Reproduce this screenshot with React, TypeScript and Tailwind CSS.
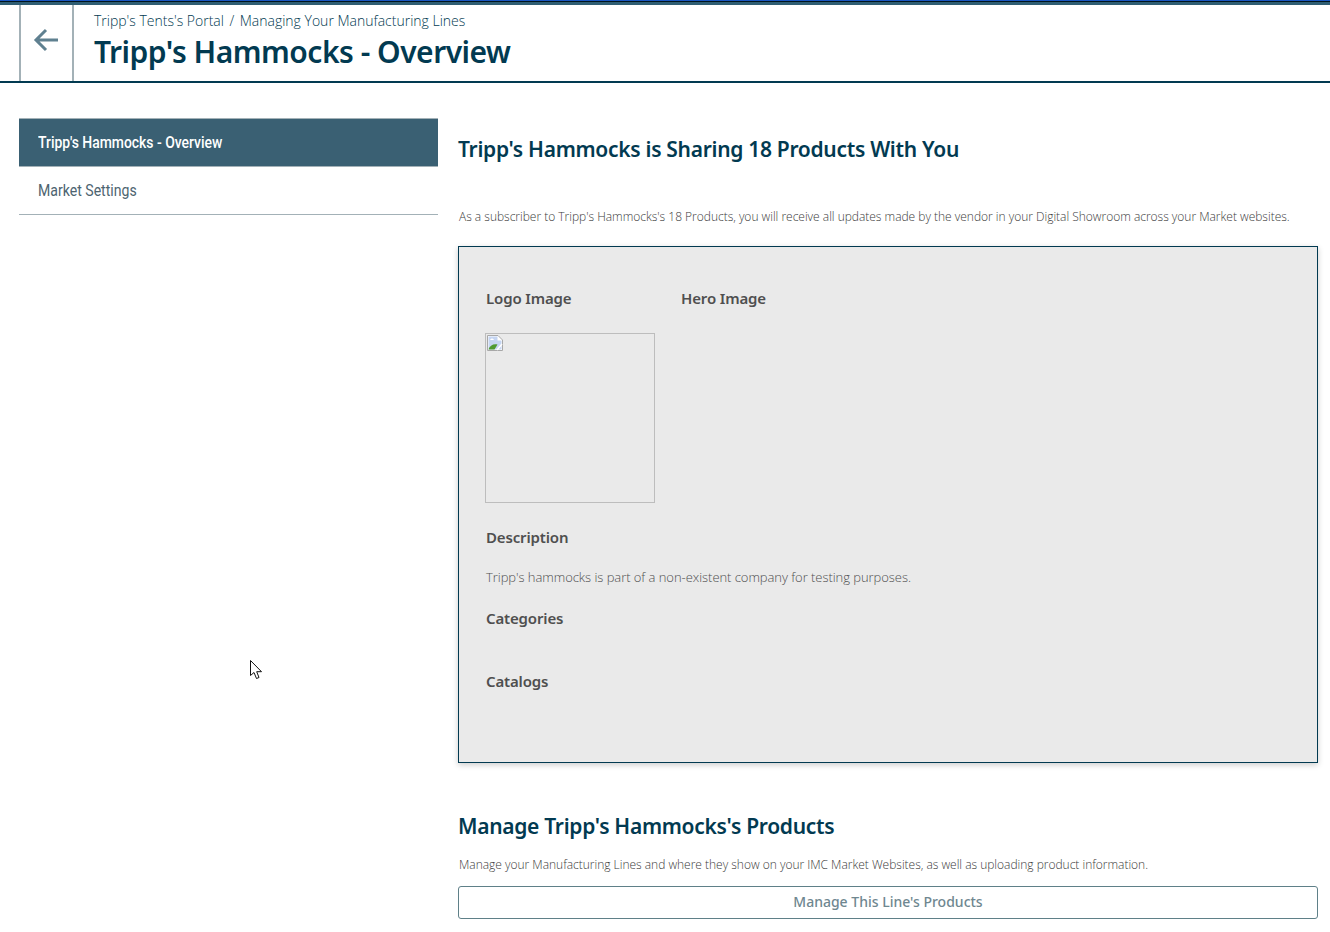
const sans = "font-['Open_Sans',sans-serif]";
const heading = "font-['Noto_Sans',sans-serif]";

const FieldLabel = ({ children }: { children: string }) => (
  <h4 className={`${heading} text-[15px] leading-[22px] font-semibold tracking-[-0.15px] text-[#4f4f4f]`}>{children}</h4>
);

const BrokenImage = () => (
  <svg width="16" height="16" viewBox="0 0 16 16" className="block">
    <path d="M0.5 0.5H11L15.5 5V15.5H0.5Z" fill="#fff" stroke="#a8a8a8" />
    <path d="M1.5 1.5H10.5V5.5H14.5V14.5H1.5Z" fill="#c5d5f2" />
    <path d="M3 5c1-2 3-2 4 0H3Z" fill="#fff" />
    <path d="M1.5 14.5c1-4 5-6 9-5l-3 5Z" fill="#4f9a32" />
    <path d="M10 15l5-6" stroke="#fff" strokeWidth="1.5" />
  </svg>
);

const Cursor = () => (
  <svg width="14" height="21" viewBox="0 0 14 21" className="absolute left-[250px] top-[660px]">
    <path d="M0.5 0.5V15.5L4 12.5L6.5 18.5L9 17.5L6.7 11.7H11.5Z" fill="#fff" stroke="#111" />
  </svg>
);

export default function App() {
  return (
    <div className={`${sans} relative min-h-[932px] bg-white`}>
      <div className="h-[5px] border-t border-[#1a56c0] bg-[#2f5d72]">
        <div className="h-px bg-[#00151f]" />
      </div>
      <header className="flex h-[78px] border-b-2 border-[#023a51] pl-[19px]">
        <button className="flex h-full w-[55px] items-center justify-center border-x-2 border-[#a3b1b7] pb-[7px] pr-[2px] text-[#5f8090]">
          <svg width="26" height="24" viewBox="0 0 26 24" fill="none" stroke="currentColor" strokeWidth="3">
            <path d="M25 12H3M13 2L3 12L13 22" />
          </svg>
        </button>
        <div className="pl-[20px] pt-[6px]">
          <p className="text-[14px] leading-[19px] font-light text-[#023a51]">
            Tripp's Tents's Portal<span className="mx-[5.5px]">/</span>Managing Your Manufacturing Lines
          </p>
          <h1 className={`${heading} mt-[2px] text-[30px] leading-[40px] font-semibold tracking-[-0.5px] text-[#023a51]`}>
            Tripp's Hammocks - Overview
          </h1>
        </div>
      </header>

      <div className="flex gap-[20px] pl-[19px] pr-[12px] pt-[35px]">
        <nav className="w-[419px] shrink-0 font-['Roboto',sans-serif] text-[16px]">
          <a className="flex h-[49px] items-center border-y border-[#a3b1b7] bg-[#3a6073] px-[19px] font-medium text-white">
            <span className="origin-left scale-x-[0.87] whitespace-nowrap">Tripp's Hammocks - Overview</span>
          </a>
          <a className="flex h-[48px] items-center border-b border-[#a3b1b7] px-[19px] text-[#4d6470]">
            <span className="origin-left scale-x-[0.88] whitespace-nowrap">Market Settings</span>
          </a>
        </nav>

        <main className="flex-1">
          <h2 className={`${heading} mt-[15px] text-[21px] leading-[32px] font-semibold tracking-[-0.3px] text-[#023a51]`}>
            Tripp's Hammocks is Sharing 18 Products With You
          </h2>
          <p className="mt-[43px] pl-px text-[12px] leading-[18px] font-light tracking-[-0.015px] text-[#3b3b3b]">
            As a subscriber to Tripp's Hammocks's 18 Products, you will receive all updates made by the vendor in your Digital Showroom across your Market websites.
          </p>

          <section className="mt-[20px] h-[517px] border border-[#023a51] bg-[#eaeaea] px-[26px] pt-[40px] shadow-[0_2px_6px_rgba(0,0,0,0.2)]">
            <div className="flex gap-[26px]">
              <div className="w-[170px]">
                <div className="pl-px">
                  <FieldLabel>Logo Image</FieldLabel>
                </div>
                <div className="mt-[24px] h-[170px] w-[170px] border border-[#bdbdbd] p-px">
                  <BrokenImage />
                </div>
              </div>
              <FieldLabel>Hero Image</FieldLabel>
            </div>
            <div className="mt-[23px] pl-px">
              <FieldLabel>Description</FieldLabel>
            </div>
            <p className="mt-[20px] pl-px text-[13px] leading-[18px] font-light tracking-[-0.05px] text-[#4f4f4f]">
              Tripp's hammocks is part of a non-existent company for testing purposes.
            </p>
            <div className="mt-[21px] pl-px">
              <FieldLabel>Categories</FieldLabel>
            </div>
            <div className="mt-[41px] pl-px">
              <FieldLabel>Catalogs</FieldLabel>
            </div>
          </section>

          <h2 className={`${heading} mt-[47px] text-[21px] leading-[32px] font-semibold tracking-[-0.3px] text-[#023a51]`}>
            Manage Tripp's Hammocks's Products
          </h2>
          <p className="mt-[14px] pl-px text-[12px] leading-[18px] font-light tracking-[-0.015px] text-[#3b3b3b]">
            Manage your Manufacturing Lines and where they show on your IMC Market Websites, as well as uploading product information.
          </p>
          <button className={`${heading} mt-[12px] h-[33px] w-full rounded-[3px] border border-[#5f8088] bg-white pb-[2px] text-[14px] font-medium text-[#6f8790]`}>
            Manage This Line's Products
          </button>
        </main>
      </div>
      <Cursor />
    </div>
  );
}
